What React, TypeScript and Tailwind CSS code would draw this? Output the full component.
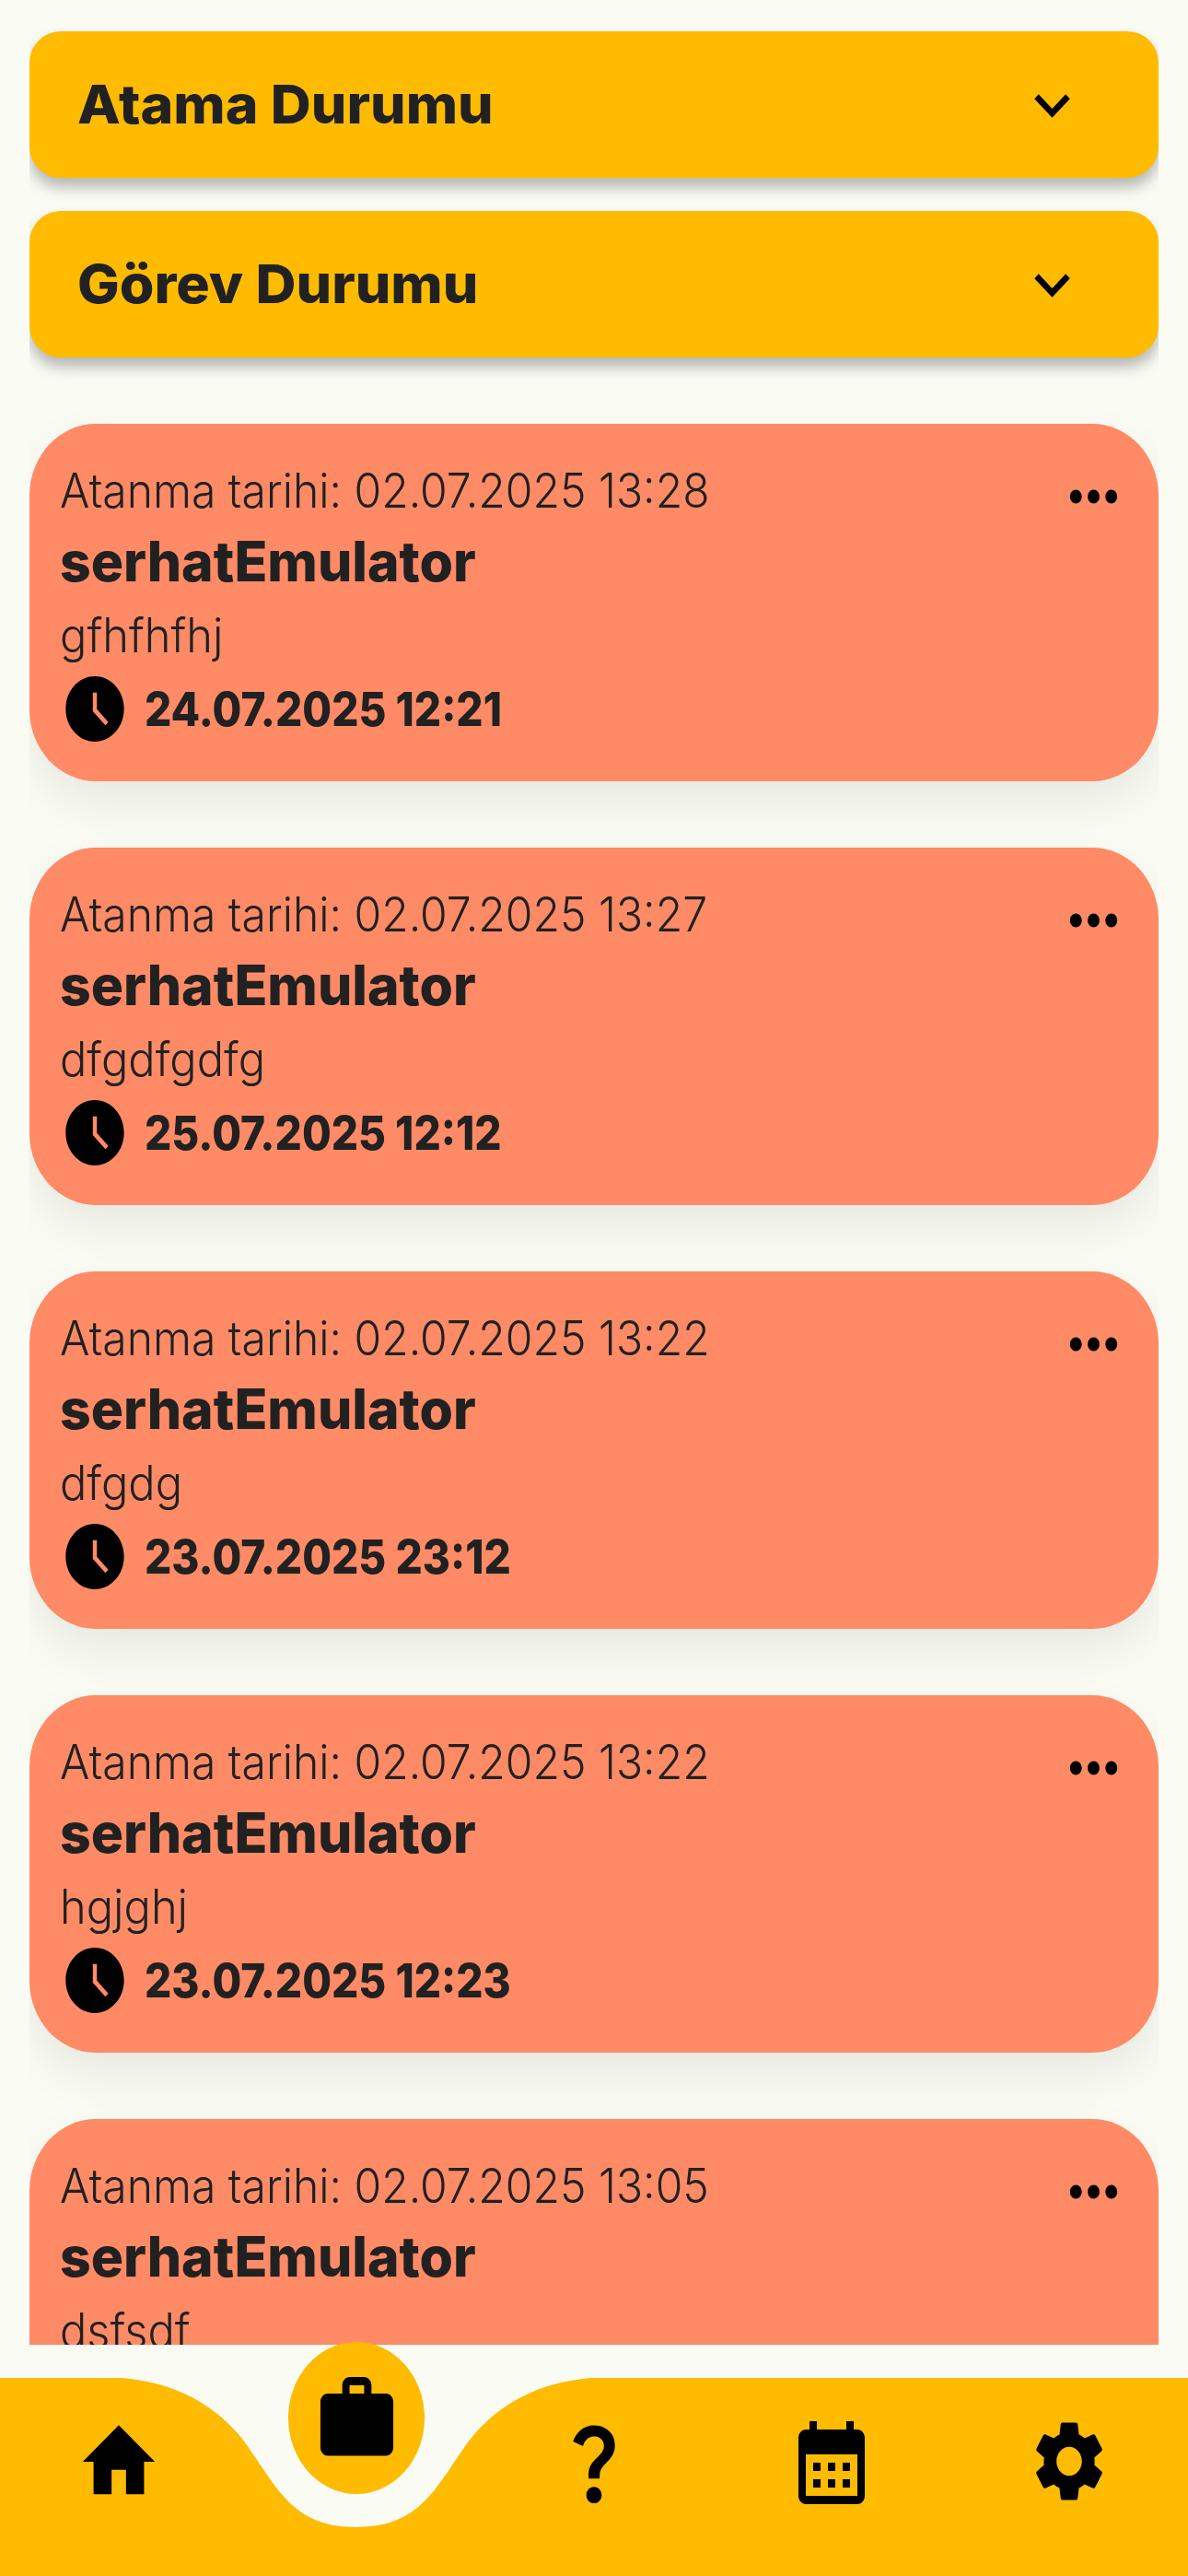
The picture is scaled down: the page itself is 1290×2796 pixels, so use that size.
const tasks = [
  { assigned: "02.07.2025 13:28", body: "gfhfhfhj", due: "24.07.2025 12:21" },
  { assigned: "02.07.2025 13:27", body: "dfgdfgdfg", due: "25.07.2025 12:12" },
  { assigned: "02.07.2025 13:22", body: "dfgdg", due: "23.07.2025 23:12" },
  { assigned: "02.07.2025 13:22", body: "hgjghj", due: "23.07.2025 12:23" },
  { assigned: "02.07.2025 13:05", body: "dsfsdf", due: "" },
];

function Icon({ d, className }: { d: string; className: string }) {
  return (
    <svg viewBox="0 0 24 24" preserveAspectRatio="none" fill="currentColor" className={className}>
      <path d={d} />
    </svg>
  );
}

const icons = {
  chevron: "M7.41 8.59L12 13.17l4.59-4.58L18 10l-6 6-6-6 1.41-1.41z",
  more: "M6 10c-1.1 0-2 .9-2 2s.9 2 2 2 2-.9 2-2-.9-2-2-2zm12 0c-1.1 0-2 .9-2 2s.9 2 2 2 2-.9 2-2-.9-2-2-2zm-6 0c-1.1 0-2 .9-2 2s.9 2 2 2 2-.9 2-2-.9-2-2-2z",
  clock: "M11.99 2C6.47 2 2 6.48 2 12s4.47 10 9.99 10C17.52 22 22 17.52 22 12S17.52 2 11.99 2zM11.3 7h1.4v5.1l3.9 3.9-1 1-4.3-4.3z",
  home: "M10 20v-6h4v6h5v-8h3L12 3 2 12h3v8z",
  work: "M20 6h-4V4c0-1.11-.89-2-2-2h-4c-1.11 0-2 .89-2 2v2H4c-1.11 0-1.99.89-1.99 2L2 19c0 1.11.89 2 2 2h16c1.11 0 2-.89 2-2V8c0-1.11-.89-2-2-2zm-6 0h-4V4h4v2z",
  question: "M11.07 12.85c.77-1.39 2.25-2.21 3.11-3.44.91-1.29.4-3.7-2.18-3.7-1.69 0-2.52 1.28-2.87 2.34L6.54 6.96C7.25 4.83 9.18 3 11.99 3c2.35 0 3.96 1.07 4.78 2.41.7 1.15 1.11 3.3.03 4.9-1.2 1.77-2.35 2.31-2.97 3.45-.25.46-.35.76-.35 2.24h-2.89c-.01-.78-.13-2.05.48-3.15zM14 20c0 1.1-.9 2-2 2s-2-.9-2-2 .9-2 2-2 2 .9 2 2z",
  calendar: "M19 4h-1V2h-2v2H8V2H6v2H5c-1.1 0-2 .9-2 2v14c0 1.1.9 2 2 2h14c1.1 0 2-.9 2-2V6c0-1.1-.9-2-2-2zm0 16H5V10h14v10zM9 14H7v-2h2v2zm4 0h-2v-2h2v2zm4 0h-2v-2h2v2zm-8 4H7v-2h2v2zm4 0h-2v-2h2v2zm4 0h-2v-2h2v2z",
  gear: "M19.14 12.94c.04-.3.06-.61.06-.94 0-.32-.02-.64-.07-.94l2.03-1.58c.18-.14.23-.41.12-.61l-1.92-3.32c-.12-.22-.37-.29-.59-.22l-2.39.96c-.5-.38-1.03-.7-1.62-.94l-.36-2.54c-.04-.24-.24-.41-.48-.41h-3.84c-.24 0-.43.17-.47.41l-.36 2.54c-.59.24-1.13.57-1.62.94l-2.39-.96c-.22-.08-.47 0-.59.22L2.74 8.87c-.12.21-.08.47.12.61l2.03 1.58c-.05.3-.09.63-.09.94s.02.64.07.94l-2.03 1.58c-.18.14-.23.41-.12.61l1.92 3.32c.12.22.37.29.59.22l2.39-.96c.5.38 1.03.7 1.62.94l.36 2.54c.05.24.24.41.48.41h3.84c.24 0 .44-.17.47-.41l.36-2.54c.59-.24 1.13-.56 1.62-.94l2.39.96c.22.08.47 0 .59-.22l1.92-3.32c.12-.22.07-.47-.12-.61l-2.01-1.58zM12 15.6c-1.98 0-3.6-1.62-3.6-3.6s1.62-3.6 3.6-3.6 3.6 1.62 3.6 3.6-1.62 3.6-3.6 3.6z",
};

function Dropdown({ label }: { label: string }) {
  return (
    <div className="h-[159px] shrink-0 flex items-center justify-between pl-[52px] pr-[77px] rounded-[34px] bg-[#ffbb00] shadow-[0_10px_16px_rgba(0,0,0,0.28)]">
      <span className="inline-block origin-left scale-x-[1.17] scale-y-[1.12] text-[52px] leading-none font-extrabold text-[#212121]">
        {label}
      </span>
      <Icon d={icons.chevron} className="w-[77px] h-[82px] text-black" />
    </div>
  );
}

function TaskCard({ assigned, body, due }: { assigned: string; body: string; due: string }) {
  return (
    <div className="h-[388px] shrink-0 flex flex-col pl-[33px] pr-[32px] pt-[33px] rounded-[72px/78px] bg-[#ff8a66] shadow-[0_22px_50px_rgba(0,0,0,0.08)] text-[#212121]">
      <div className="h-[78px] flex items-center justify-between">
        <span className="inline-block origin-left scale-x-[1.045] scale-y-[1.12] text-[46px] leading-none font-light">
          Atanma tarihi: {assigned}
        </span>
        <Icon d={icons.more} className="w-[77px] h-[90px] mt-[14px] text-black" />
      </div>
      <div className="h-[78px] flex items-center">
        <span className="inline-block origin-left scale-x-[1.09] scale-y-[1.12] text-[54px] leading-none font-extrabold">
          serhatEmulator
        </span>
      </div>
      <div className="h-[80px] flex items-center">
        <span className="inline-block origin-left scale-x-[1.06] scale-y-[1.12] text-[46px] leading-none font-light">
          {body}
        </span>
      </div>
      <div className="h-[80px] flex items-center gap-[16px]">
        <Icon d={icons.clock} className="w-[76px] h-[85px] shrink-0 text-black" />
        <span className="inline-block origin-left scale-x-[1.0] scale-y-[1.12] text-[46px] leading-none font-extrabold">
          {due}
        </span>
      </div>
    </div>
  );
}

function BottomNav() {
  return (
    <div className="relative h-[215px] shrink-0 grid grid-cols-5 justify-items-center items-start pt-[38px] text-black">
      <svg viewBox="0 0 1290 215" className="absolute inset-0 w-full h-full text-[#ffbb00]" fill="currentColor">
        <path d="M0 0H132C190 5 232 28 263 66C300 116 315 162 387 162C459 162 474 116 511 66C542 28 584 5 642 0H1290V215H0Z" />
      </svg>
      <Icon d={icons.home} className="relative w-[94px] h-[106px]" />
      <div className="relative -mt-[77px] w-[148px] h-[165px] rounded-[50%] bg-[#ffbb00] flex items-center justify-center">
        <Icon d={icons.work} className="w-[95px] h-[108px]" />
      </div>
      <Icon d={icons.question} className="relative w-[100px] h-[107px]" />
      <Icon d={icons.calendar} className="relative w-[96px] h-[108px]" />
      <Icon d={icons.gear} className="relative w-[92px] h-[105px]" />
    </div>
  );
}

export default function App() {
  return (
    <div className="w-[1290px] h-[2796px] flex flex-col bg-[#fafbf3] font-['Inter',sans-serif] [font-optical-sizing:none] overflow-hidden">
      <div className="h-[2545px] mx-[32px] mb-[36px] shrink-0 overflow-hidden flex flex-col pt-[34px]">
        <div className="flex flex-col gap-[36px]">
          <Dropdown label="Atama Durumu" />
          <Dropdown label="Görev Durumu" />
        </div>
        <div className="flex flex-col gap-[72px] mt-[72px]">
          {tasks.map((t, i) => (
            <TaskCard key={i} {...t} />
          ))}
        </div>
      </div>
      <BottomNav />
    </div>
  );
}
